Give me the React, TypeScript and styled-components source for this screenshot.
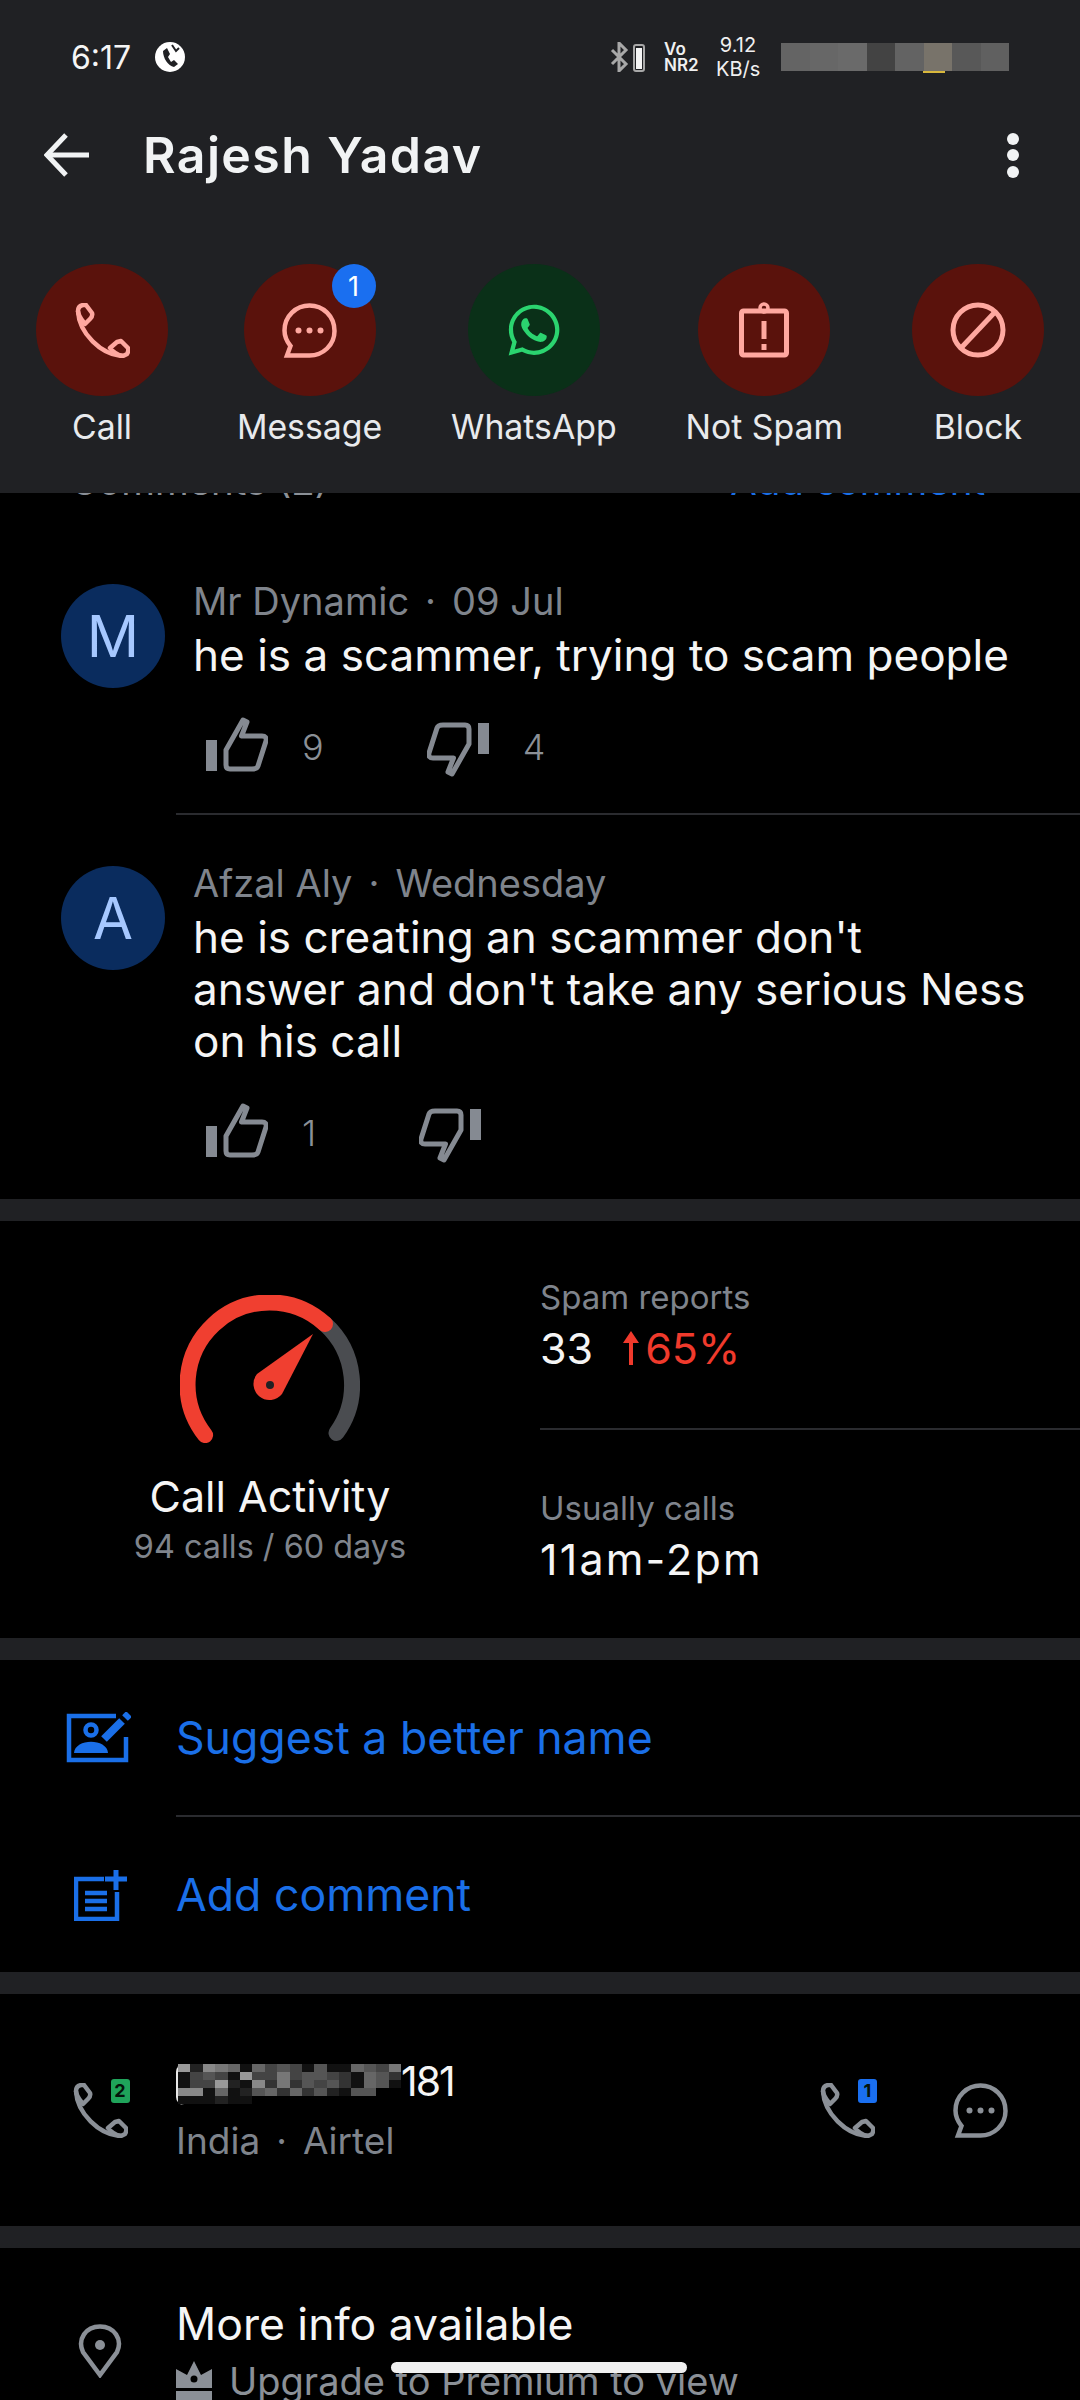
import React from "react";
import styled, { createGlobalStyle } from "styled-components";
import { FaWhatsapp } from "react-icons/fa";

const Global = createGlobalStyle`
  html, body { margin: 0; padding: 0; background: #000; }
  #root { width: 1080px; height: 2400px; overflow: hidden; }
  * { box-sizing: border-box; }
`;

const Page = styled.div`
  position: relative;
  width: 1080px;
  height: 2400px;
  overflow: hidden;
  background: #000;
  color: #fff;
  font-family: Inter, "Liberation Sans", sans-serif;
`;

const Header = styled.header`
  position: relative;
  z-index: 2;
  height: 493px;
  background: #202124;
`;

const StatusBar = styled.div`
  display: flex;
  align-items: center;
  height: 114px;
  padding: 0 71px 0 71px;
`;

const Time = styled.span`
  font-size: 32px;
  width: 84px;
  color: #f5f5f5;
`;

const StatusRight = styled.div`
  display: flex;
  align-items: center;
  margin-left: auto;
`;

const VoNr = styled.div`
  display: flex;
  flex-direction: column;
  width: 40px;
  margin: 0 12px 0 18px;
  font-size: 17px;
  line-height: 16px;
  font-weight: 600;
  color: #f0f0f0;
`;

const Speed = styled.div`
  width: 44px;
  margin-right: 21px;
  font-size: 20px;
  line-height: 24px;
  text-align: center;
  color: #f0f0f0;
`;

const StatusMosaic = styled.div`
  position: relative;
  display: flex;
  height: 28px;
`;

const StatusCell = styled.i<{ $c: string }>`
  display: block;
  width: 28.5px;
  background: ${(p) => p.$c};
`;

const YellowMark = styled.i`
  position: absolute;
  left: 142px;
  bottom: -2px;
  width: 22px;
  height: 2px;
  background: #d9b83c;
`;

const TitleBar = styled.div`
  display: flex;
  align-items: center;
  height: 82px;
  padding: 0 61px 0 44px;
`;

const Title = styled.h1`
  margin: 0 0 0 54px;
  font-size: 50px;
  line-height: 60px;
  font-weight: 600;
  color: #f1f3f4;
  letter-spacing: 1.4px;
`;

const Dots = styled.div`
  display: flex;
  flex-direction: column;
  gap: 4.5px;
  margin-left: auto;
`;

const Dot = styled.i`
  display: block;
  width: 12px;
  height: 12px;
  border-radius: 50%;
  background: #f1f3f4;
`;

const Actions = styled.div`
  display: flex;
  justify-content: space-between;
  padding: 68px 36px 0;
`;

const Action = styled.div`
  display: flex;
  flex-direction: column;
  align-items: center;
`;

const Circle = styled.div<{ $green?: boolean }>`
  position: relative;
  display: flex;
  align-items: center;
  justify-content: center;
  width: 132px;
  height: 132px;
  border-radius: 50%;
  background: ${(p) => (p.$green ? "#0a3018" : "#5a120c")};
  color: ${(p) => (p.$green ? "#2bd46f" : "#ffa8a0")};
`;

const CircleBadge = styled.span`
  position: absolute;
  top: 0;
  right: 0;
  display: flex;
  align-items: center;
  justify-content: center;
  width: 44px;
  height: 44px;
  border-radius: 50%;
  background: #1a6ff0;
  color: #fff;
  font-size: 27px;
`;

const ActionLabel = styled.span`
  margin-top: 11px;
  font-size: 33.8px;
  line-height: 40px;
  color: #e8eaed;
  white-space: nowrap;
`;

const Body = styled.main`
  margin-top: -30px;
`;

const CommentsHead = styled.div`
  display: flex;
  justify-content: space-between;
  height: 70px;
  padding: 0 95px 0 70px;
  font-size: 38.5px;
  line-height: 36px;
  color: #8b9097;
`;

const AddLink = styled.span`
  color: #1a6fe8;
`;

const Comment = styled.article`
  display: flex;
  align-items: flex-start;
  padding: 42px 0 36px 61px;
`;

const Avatar = styled.div`
  flex: none;
  display: flex;
  align-items: center;
  justify-content: center;
  width: 104px;
  height: 104px;
  margin: 9px 28px 0 0;
  border-radius: 50%;
  background: #0a2c5e;
  color: #a6c8ff;
  font-size: 58px;
`;

const CommentMain = styled.div`
  min-width: 0;
  flex: 1;
`;

const Meta = styled.div`
  font-size: 38px;
  line-height: 52px;
  color: #7f848c;
`;

const Sep = styled.span`
  margin: 0 16px;
`;

const CommentText = styled.p`
  margin: 2px 0 0;
  font-size: 44.1px;
  line-height: 52px;
  color: #f5f5f5;
  white-space: pre-line;
`;

const Votes = styled.div`
  display: flex;
  align-items: center;
  height: 60px;
  margin-top: 36px;
  padding-left: 13px;
`;

const Thumb = styled.svg<{ $down?: boolean }>`
  width: 62px;
  height: 60px;
  flex: none;
  margin-left: ${(p) => (p.$down ? "103px" : "0")};
  transform: ${(p) => (p.$down ? "rotate(180deg)" : "none")};
`;

const Count = styled.span`
  margin-left: 34px;
  font-size: 36px;
  color: #8b9097;
  font-weight: 300;
`;

const Rule = styled.hr<{ $left: number }>`
  height: 2px;
  margin: 0 0 0 ${(p) => p.$left}px;
  border: 0;
  background: #2a2b2f;
`;

const Band = styled.div`
  height: 22px;
  background: #202124;
`;

const Activity = styled.section`
  display: grid;
  grid-template-columns: 540px 540px;
  height: 417px;
`;

const Gauge = styled.div`
  display: flex;
  flex-direction: column;
  align-items: center;
  padding-top: 74px;
`;

const GaugeTitle = styled.div`
  margin-top: 27px;
  font-size: 43px;
  line-height: 52px;
  color: #f5f5f5;
`;

const GaugeSub = styled.div`
  margin-top: 5px;
  font-size: 32.4px;
  line-height: 40px;
  color: #7f848c;
`;

const Stats = styled.div`
  padding-top: 56px;
`;

const StatLabel = styled.div`
  font-size: 33px;
  line-height: 40px;
  color: #7f848c;
`;

const StatValue = styled.div<{ $wide?: boolean }>`
  display: flex;
  align-items: center;
  height: 52px;
  margin-top: 5px;
  font-size: 43px;
  letter-spacing: ${(p) => (p.$wide ? "2.2px" : "0")};
  color: #f5f5f5;
`;

const Trend = styled.span`
  display: flex;
  align-items: center;
  gap: 5px;
  margin-left: 29px;
  color: #f03a2c;
`;

const StatRule = styled.hr`
  height: 2px;
  margin: 54px 0 58px;
  border: 0;
  background: #2a2b2f;
`;

const LinkRow = styled.div`
  display: flex;
  align-items: center;
  height: 155px;
  font-size: 44.6px;
  color: #1a6fe8;
`;

const IconSlot = styled.div`
  flex: none;
  display: flex;
  justify-content: center;
  width: 176px;
  padding-left: 24px;
`;

const SuggestSlot = styled(IconSlot)`
  padding-left: 20px;
`;

const PhoneRow = styled.section`
  display: flex;
  align-items: center;
  height: 232px;
  padding-right: 72px;
`;

const PhoneWrap = styled.div`
  position: relative;
  width: 55px;
  height: 55px;
  color: #8b9097;
`;

const SimBadge = styled.span<{ $c: string }>`
  position: absolute;
  top: -4px;
  right: -2px;
  display: flex;
  align-items: center;
  justify-content: center;
  width: 19px;
  height: 24px;
  border-radius: 3px;
  background: ${(p) => p.$c};
  color: #04130a;
  font-size: 18px;
  font-weight: 700;
`;

const PhoneText = styled.div`
  flex: 1;
`;

const NumberLine = styled.div`
  display: flex;
  align-items: center;
  height: 52px;
  font-size: 41px;
  letter-spacing: -2px;
  color: #f5f5f5;
`;

const Mosaic = styled.div`
  display: grid;
  grid-template-columns: repeat(18, 12.4px);
  grid-auto-rows: 8.2px;
  height: 41px;
  margin-top: 6px;
  border-left: 2px solid #e8e8e8;
  border-radius: 8px 0 0 8px;
`;

const MosaicCell = styled.i<{ $v: string }>`
  display: block;
  background: #${(p) => p.$v.repeat(3)};
`;

const SubLine = styled.div`
  margin-top: 10px;
  font-size: 37px;
  line-height: 48px;
  color: #7f848c;
`;

const RowActions = styled.div`
  display: flex;
  align-items: center;
  gap: 78px;
`;

const GreyIcon = styled.svg`
  display: block;
  flex: none;
  color: #8b9097;
`;

const MoreRow = styled.section`
  display: flex;
  align-items: flex-start;
  padding-top: 50px;
`;

const PinSlot = styled(IconSlot)`
  padding-top: 26px;
`;

const MoreTitle = styled.div`
  font-size: 44.5px;
  line-height: 52px;
  color: #f5f5f5;
`;

const Upgrade = styled.div`
  display: flex;
  align-items: center;
  gap: 17px;
  margin-top: 7px;
  font-size: 38px;
  line-height: 48px;
  color: #8b9097;
`;

const HomeBar = styled.div`
  position: absolute;
  left: 391px;
  top: 2362px;
  z-index: 3;
  width: 296px;
  height: 11px;
  border-radius: 6px;
  background: #f0f0f0;
`;

const PhoneGlyph = ({ size = 55 }: { size?: number }) => (
  <svg width={size} height={size} viewBox="0 0 55 55" fill="none" stroke="currentColor" strokeWidth="4.5" strokeLinejoin="round">
    <path d="M3 8Q3 3 8 2L11 2L17 10Q18 13 15 16L10 21C7 17 3 13 3 8Z" />
    <path d="M3 8C4 30 26 52 48 53" />
    <path d="M35 45L42 39L46 38L53 45Q54 48 52 51L48 53C43 52 38 49 35 45Z" />
  </svg>
);

const BubbleGlyph = () => (
  <svg width="55" height="55" viewBox="0 0 55 55" fill="none" stroke="currentColor" strokeWidth="4.5">
    <path d="M27.5 2.5C41 2.5 52.5 13 52.5 28C52.5 42 41 52.5 27.5 52.5H5L8.5 43C4.5 38 2.5 33 2.5 27.5C2.5 13 14 2.5 27.5 2.5Z" />
    <g fill="currentColor" stroke="none">
      <circle cx="16.5" cy="27.5" r="3" />
      <circle cx="27.5" cy="27.5" r="3" />
      <circle cx="38.5" cy="27.5" r="3" />
    </g>
  </svg>
);

const ThumbGlyph = ({ down }: { down?: boolean }) => (
  <Thumb $down={down} viewBox="0 0 62 60" fill="none" stroke="#858a92" strokeWidth="5" strokeLinejoin="round">
    <rect x="0" y="23" width="11" height="31" fill="#858a92" stroke="none" />
    <path d="M20 33L37 3L41 5L35.5 19H56Q61 19 60 24L52 49Q51 52 46 52H24Q20 52 20 48Z" />
  </Thumb>
);

const statusCells = ["#646464", "#676767", "#6a6a6a", "#434343", "#636363", "#78736a", "#585858", "#606060"];

const numberRows = [
  "928761645415116547",
  "145419447455431653",
  "144921837354531651",
  "881612563635215500",
  "111211000000000000",
];

const comments = [
  { initial: "M", name: "Mr Dynamic", when: "09 Jul", text: "he is a scammer, trying to scam people", up: "9", down: "4" },
  { initial: "A", name: "Afzal Aly", when: "Wednesday", text: "he is creating an scammer don't\nanswer and don't take any serious Ness\non his call", up: "1", down: "" },
];

const actions = [
  {
    label: "Call",
    icon: <PhoneGlyph />,
  },
  {
    label: "Message",
    badge: "1",
    icon: <BubbleGlyph />,
  },
  {
    label: "WhatsApp",
    green: true,
    icon: <FaWhatsapp size={58} />,
  },
  {
    label: "Not Spam",
    icon: (
      <svg width="50" height="56" viewBox="0 0 50 56" fill="none" stroke="currentColor" strokeWidth="5" strokeLinejoin="round">
        <rect x="2.5" y="9" width="45" height="44" rx="2" />
        <circle cx="25" cy="6" r="4" strokeWidth="3.5" />
        <path d="M25 19V37" />
        <path d="M25 42V48" />
      </svg>
    ),
  },
  {
    label: "Block",
    icon: (
      <svg width="56" height="56" viewBox="0 0 56 56" fill="none" stroke="currentColor" strokeWidth="5">
        <circle cx="28" cy="28" r="25" />
        <path d="M11 46L45 10" />
      </svg>
    ),
  },
];

export default function App() {
  return (
    <Page>
      <Global />
      <Header>
        <StatusBar>
          <Time>6:17</Time>
          <svg width="30" height="30" viewBox="0 0 30 30">
            <circle cx="15" cy="15" r="15" fill="#fff" />
            <path d="M8 9L12 6L15 12L13 15L16 20L19 18L23 22L19 25C13 24 8 16 8 9Z" fill="#202124" />
            <path d="M17 3L21 9L24 6" fill="none" stroke="#202124" strokeWidth="2" />
          </svg>
          <StatusRight>
            <svg width="36" height="30" viewBox="0 0 36 30" fill="none" stroke="#a8a8a8">
              <path d="M2 8L16 22L9 29V1L16 8L2 22" strokeWidth="3" />
              <rect x="24" y="3" width="10" height="26" rx="2" strokeWidth="2" />
              <rect x="26" y="6" width="6" height="21" fill="#f5f5f5" stroke="none" />
            </svg>
            <VoNr>
              <span>Vo</span>
              <span>NR2</span>
            </VoNr>
            <Speed>
              9.12
              <br />
              KB/s
            </Speed>
            <StatusMosaic>
              {statusCells.map((c, i) => (
                <StatusCell key={i} $c={c} />
              ))}
              <YellowMark />
            </StatusMosaic>
          </StatusRight>
        </StatusBar>
        <TitleBar>
          <svg width="45" height="44" viewBox="0 0 45 44" fill="none" stroke="#f1f3f4" strokeWidth="5">
            <path d="M45 22H4" />
            <path d="M22 2L3 22L22 42" />
          </svg>
          <Title>Rajesh Yadav</Title>
          <Dots>
            <Dot />
            <Dot />
            <Dot />
          </Dots>
        </TitleBar>
        <Actions>
          {actions.map((a) => (
            <Action key={a.label}>
              <Circle $green={a.green}>
                {a.icon}
                {a.badge && <CircleBadge>{a.badge}</CircleBadge>}
              </Circle>
              <ActionLabel>{a.label}</ActionLabel>
            </Action>
          ))}
        </Actions>
      </Header>
      <Body>
        <CommentsHead>
          <span>Comments (2)</span>
          <AddLink>Add comment</AddLink>
        </CommentsHead>
        {comments.map((c, i) => (
          <React.Fragment key={c.initial}>
            {i > 0 && <Rule $left={176} />}
            <Comment>
              <Avatar>{c.initial}</Avatar>
              <CommentMain>
                <Meta>
                  {c.name}
                  <Sep>·</Sep>
                  {c.when}
                </Meta>
                <CommentText>{c.text}</CommentText>
                <Votes>
                  <ThumbGlyph />
                  <Count>{c.up}</Count>
                  <ThumbGlyph down />
                  {c.down && <Count>{c.down}</Count>}
                </Votes>
              </CommentMain>
            </Comment>
          </React.Fragment>
        ))}
        <Band />
        <Activity>
          <Gauge>
            <svg width="180" height="148" viewBox="0 0 180 148" fill="none" strokeWidth="16" strokeLinecap="round">
              <path d="M145 29A82 82 0 0 1 156.5 137.9" stroke="#4a4c50" />
              <path d="M25.1 140.1A82 82 0 0 1 145 29" stroke="#f03f30" />
              <path d="M133 39L102 99A15 15 0 1 1 77 79Z" fill="#f03f30" stroke="none" />
              <circle cx="90" cy="90" r="4" fill="#202124" stroke="none" />
            </svg>
            <GaugeTitle>Call Activity</GaugeTitle>
            <GaugeSub>94 calls / 60 days</GaugeSub>
          </Gauge>
          <Stats>
            <StatLabel>Spam reports</StatLabel>
            <StatValue>
              33
              <Trend>
                <svg width="18" height="34" viewBox="0 0 18 34" fill="#f03a2c">
                  <path d="M9 0L17 12H11V34H7V12H1Z" />
                </svg>
                65%
              </Trend>
            </StatValue>
            <StatRule />
            <StatLabel>Usually calls</StatLabel>
            <StatValue $wide>11am-2pm</StatValue>
          </Stats>
        </Activity>
        <Band />
        <LinkRow>
          <SuggestSlot>
            <svg width="65" height="51" viewBox="0 0 65 51" fill="none" stroke="#1a6fe8" strokeWidth="4.5">
              <path d="M50 4H3V48H60V25" />
              <circle cx="25" cy="18" r="5.5" />
              <path d="M8 41C9 26 41 26 42 41Z" fill="#1a6fe8" stroke="none" />
              <path d="M38 27L56 9" strokeWidth="8" />
              <path d="M59 6L63 2" strokeWidth="8" />
            </svg>
          </SuggestSlot>
          Suggest a better name
        </LinkRow>
        <Rule $left={176} />
        <LinkRow>
          <IconSlot>
            <svg width="53" height="52" viewBox="0 0 53 52" fill="none" stroke="#1a6fe8" strokeWidth="4.5">
              <path d="M30 10H2V50H43V23" />
              <path d="M11 24H33M11 32H33M11 40H33" />
              <path d="M42 1V21M31 10H53" strokeWidth="5" />
            </svg>
          </IconSlot>
          Add comment
        </LinkRow>
        <Band />
        <PhoneRow>
          <IconSlot>
            <PhoneWrap>
              <PhoneGlyph />
              <SimBadge $c="#1fa35a">2</SimBadge>
            </PhoneWrap>
          </IconSlot>
          <PhoneText>
            <NumberLine>
              <Mosaic>
                {numberRows.flatMap((row, r) =>
                  row.split("").map((v, c) => <MosaicCell key={`${r}-${c}`} $v={v} />)
                )}
              </Mosaic>
              181
            </NumberLine>
            <SubLine>
              India
              <Sep>·</Sep>
              Airtel
            </SubLine>
          </PhoneText>
          <RowActions>
            <PhoneWrap>
              <PhoneGlyph />
              <SimBadge $c="#1a6ff0">1</SimBadge>
            </PhoneWrap>
            <PhoneWrap>
              <BubbleGlyph />
            </PhoneWrap>
          </RowActions>
        </PhoneRow>
        <Band />
        <MoreRow>
          <PinSlot>
            <GreyIcon width="44" height="54" viewBox="0 0 44 54" fill="none" stroke="currentColor" strokeWidth="4.5">
              <path d="M22 51L5 28C-1 15 8 2.5 22 2.5C36 2.5 45 15 39 28Z" />
              <circle cx="22" cy="21" r="5" fill="currentColor" stroke="none" />
            </GreyIcon>
          </PinSlot>
          <div>
            <MoreTitle>More info available</MoreTitle>
            <Upgrade>
              <GreyIcon width="36" height="40" viewBox="0 0 36 40" fill="currentColor">
                <path d="M18 0L25 14L36 8V27H0V8L11 14Z" />
                <circle cx="18" cy="18" r="3.5" fill="#000" />
                <rect x="0" y="30" width="36" height="9" />
              </GreyIcon>
              Upgrade to Premium to view
            </Upgrade>
          </div>
        </MoreRow>
      </Body>
      <HomeBar />
    </Page>
  );
}
